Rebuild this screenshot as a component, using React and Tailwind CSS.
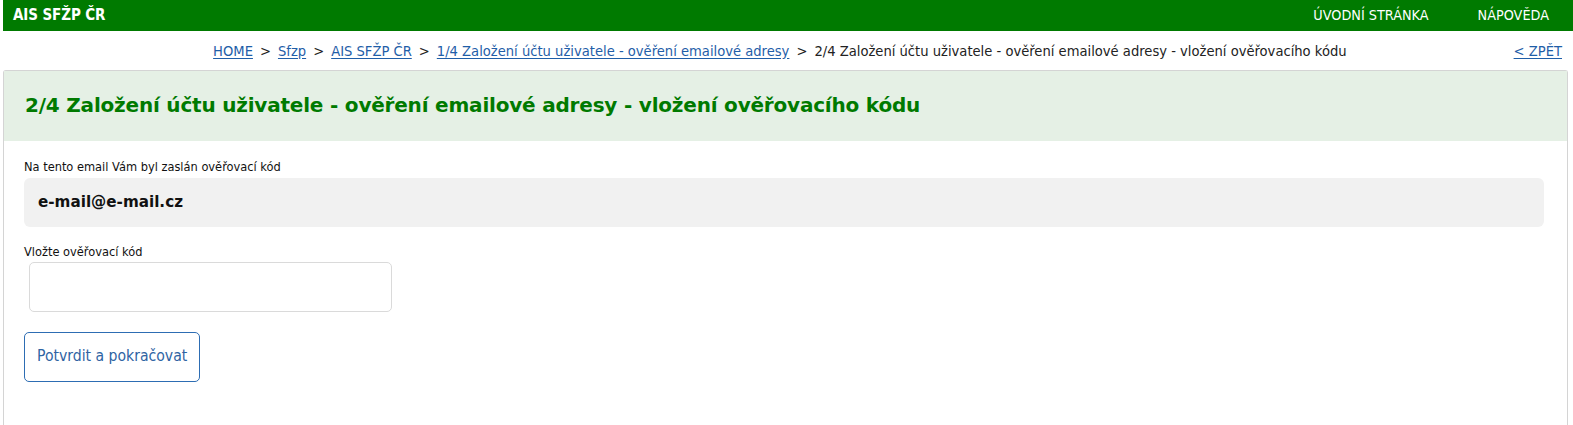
const FONT = "font-['DejaVu_Sans_Condensed','DejaVu_Sans',sans-serif]"

const CRUMBS = [
  'HOME',
  'Sfzp',
  'AIS SFŽP ČR',
  '1/4 Založení účtu uživatele - ověření emailové adresy',
]

export default function App() {
  return (
    <div className={`${FONT} bg-white min-h-[425px] pl-[3px] text-[#222]`}>
      {/* Top bar */}
      <header className="h-[31px] bg-[#007a00] flex items-center justify-between pl-[10px] pr-[24px] text-white">
        <span className="text-[15px] font-bold tracking-[-0.1px]">AIS SFŽP ČR</span>
        <nav className="flex items-center gap-[49px] text-[14.3px]">
          <a>ÚVODNÍ STRÁNKA</a>
          <a>NÁPOVĚDA</a>
        </nav>
      </header>

      {/* Breadcrumb */}
      <div className="h-[39px] flex items-center justify-end pr-[11px] text-[14.6px]">
        <div className="flex items-center">
          {CRUMBS.map(c => (
            <span key={c} className="flex items-center">
              <a className="text-[#1f5ea8] underline underline-offset-2">{c}</a>
              <span className="mx-[7px] text-[#222]">&gt;</span>
            </span>
          ))}
          <span>2/4 Založení účtu uživatele - ověření emailové adresy - vložení ověřovacího kódu</span>
        </div>
        <a className="ml-[167px] text-[#1f5ea8] underline underline-offset-2">&lt; ZPĚT</a>
      </div>

      {/* Card */}
      <section className="mr-[5px] border border-[#d4d4d4] border-b-0 rounded-t-[3px] min-h-[355px]">
        <div className="h-[70px] bg-[#e5f0e5] flex items-center px-[21px]">
          <h1 className="font-['DejaVu_Sans',sans-serif] font-bold text-[20px] text-[#007a00] tracking-[-0.2px] -mt-[3px]">
            2/4 Založení účtu uživatele - ověření emailové adresy - vložení ověřovacího kódu
          </h1>
        </div>

        <div className="pl-[20px] pr-[23px] pt-[18px]">
          <label className="block text-[12.7px] leading-[16px] text-[#111]">Na tento email Vám byl zaslán ověřovací kód</label>
          <div className="mt-[3px] h-[49px] bg-[#f1f1f1] rounded-[6px] flex items-center px-[14px]">
            <span className="font-['DejaVu_Sans',sans-serif] font-bold text-[15.2px] text-[#111]">e-mail@e-mail.cz</span>
          </div>

          <label className="block mt-[17px] text-[12.7px] leading-[16px] text-[#111]">Vložte ověřovací kód</label>
          <input className="block mt-[2px] ml-[5px] w-[363px] h-[50px] border border-[#dadada] rounded-[5px] outline-none px-3" />

          <button className="mt-[20px] h-[50px] px-[12px] border border-[#2d6db3] rounded-[5px] text-[15.6px] text-[#2f64a3] bg-white">
            Potvrdit a pokračovat
          </button>
        </div>
      </section>
    </div>
  )
}
